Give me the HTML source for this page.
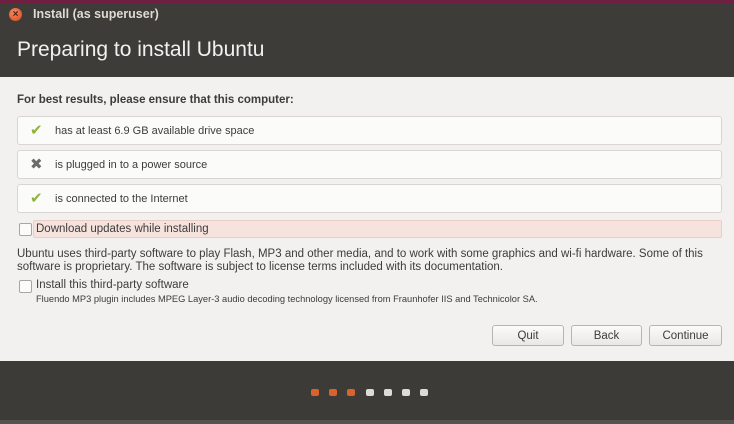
<!DOCTYPE html>
<html><head><style>
*{margin:0;padding:0;box-sizing:border-box}
body{width:734px;height:424px;overflow:hidden;background:#3c3b37;font-family:"Liberation Sans","DejaVu Sans",sans-serif;position:relative;color:#3c3c3c}
.abs{position:absolute}
.top{left:0;top:0;width:734px;height:3px;background:#6e1f42}
.hdr{left:0;top:3px;width:734px;height:74px;background:#3d3c38}
.title{left:33px;top:7px;font-size:12.5px;color:#dfdbd2;font-weight:bold}
.close{left:9px;top:8px;width:13px;height:13px;border-radius:50%;background:radial-gradient(circle at 40% 35%,#f58a62,#d8461c);color:#4a1e10;font-size:10px;line-height:13px;text-align:center;font-weight:bold}
.h1{left:17px;top:38px;font-size:21px;color:#f2f1ef}
.main{left:0;top:77px;width:734px;height:284px;background:#f2f1f0}
.lead{left:17px;top:94px;font-size:11.5px;font-weight:bold;color:#3c3c3c}
.row{left:17px;width:705px;height:29px;background:#fbfbfa;border:1px solid #d8d6d2;border-radius:3px;font-size:11px;line-height:28px;padding-left:37px}
.ic{position:absolute;left:12px;top:5px;font-size:15px;line-height:17px}
.chk{color:#8fb43a}
.x{color:#6b6b6b}
.cb{width:13px;height:13px;border:1px solid #a8a6a1;border-radius:2px;background:#fbfbfa}
.pink{left:33px;top:220px;width:689px;height:18px;background:#f7e3dd;border:1px solid #e8cfc6;border-radius:2px;font-size:11.5px;line-height:17px;padding-left:2px}
.t{font-size:11.5px;line-height:13px}
.btn{top:325px;height:21px;border:1px solid #b8b5ae;border-radius:3px;background:linear-gradient(#fbfbfa,#e9e8e5);font-size:11.5px;line-height:20px;text-align:center;color:#3c3c3c}
.dot{top:389px;width:8px;height:7px;border-radius:2px;background:#dcdbd7}
.o{background:#d9622d}
.foot{left:0;top:420px;width:734px;height:4px;background:#55534f}
</style></head><body>
<div class="abs top"></div>
<div class="abs hdr"></div>
<div class="abs close">×</div>
<div class="abs title">Install (as superuser)</div>
<div class="abs h1">Preparing to install Ubuntu</div>
<div class="abs main"></div>
<div class="abs lead">For best results, please ensure that this computer:</div>
<div class="abs row" style="top:116px"><span class="ic chk">✔</span>has at least 6.9 GB available drive space</div>
<div class="abs row" style="top:150px"><span class="ic x">✖</span>is plugged in to a power source</div>
<div class="abs row" style="top:184px"><span class="ic chk">✔</span>is connected to the Internet</div>
<div class="abs cb" style="left:19px;top:223px"></div>
<div class="abs pink">Download updates while installing</div>
<div class="abs t" style="left:17px;top:248px;width:712px">Ubuntu uses third-party software to play Flash, MP3 and other media, and to work with some graphics and wi-fi hardware. Some of this software is proprietary. The software is subject to license terms included with its documentation.</div>
<div class="abs cb" style="left:19px;top:280px"></div>
<div class="abs" style="left:36px;top:279px;font-size:11.5px">Install this third-party software</div>
<div class="abs" style="left:36px;top:294px;font-size:9.3px">Fluendo MP3 plugin includes MPEG Layer-3 audio decoding technology licensed from Fraunhofer IIS and Technicolor SA.</div>
<div class="abs btn" style="left:492px;width:72px">Quit</div>
<div class="abs btn" style="left:571px;width:71px">Back</div>
<div class="abs btn" style="left:649px;width:73px">Continue</div>
<div class="abs dot o" style="left:311px"></div>
<div class="abs dot o" style="left:329px"></div>
<div class="abs dot o" style="left:347px"></div>
<div class="abs dot" style="left:366px"></div>
<div class="abs dot" style="left:384px"></div>
<div class="abs dot" style="left:402px"></div>
<div class="abs dot" style="left:420px"></div>
<div class="abs foot"></div>
</body></html>
